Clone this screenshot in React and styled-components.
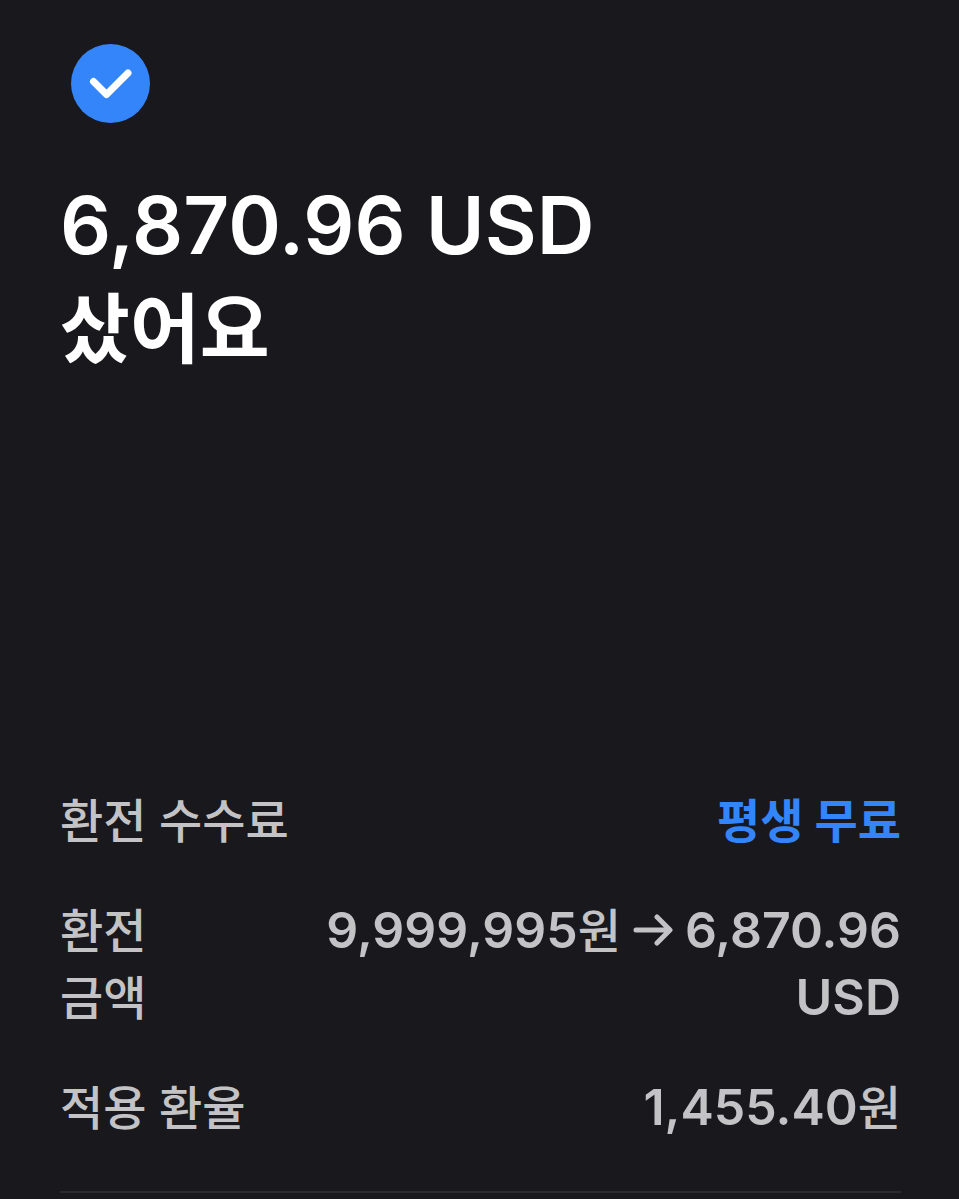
import React from 'react'
import styled, { createGlobalStyle } from 'styled-components'

const GlobalStyle = createGlobalStyle`
  *{
    box-sizing: border-box;
  }
  body{
    margin: 0;
    background: #19181d;
    font-family: Inter, "Noto Sans CJK KR", sans-serif;
    word-break: keep-all;
  }
`

const Page = styled.main`
  padding: 44px 58px 0 60px;
  overflow: hidden;
`

const CheckIcon = styled.svg`
  display: block;
  width: 80px;
  height: 80px;
  margin-left: 11px;
`

const Title = styled.h1`
  margin: 48px 0 0;
  color: #ffffff;
  font-size: 80px;
  font-weight: 600;
  line-height: 105px;
  .korean{
    display: block;
    font-size: 76px;
    font-weight: 700;
  }
`

const Details = styled.dl`
  display: flex;
  flex-direction: column;
  gap: 43px;
  margin: 405px 0 0;
  padding-bottom: 50px;
  border-bottom: 2px solid #2a2a32;
`

const Row = styled.div`
  display: flex;
  justify-content: space-between;
  line-height: 67px;
`

const Label = styled.dt`
  width: ${props => props.$narrow ? '100px' : 'auto'};
  color: #c3c3c6;
  font-size: 47px;
  font-weight: 500;
`

const Value = styled.dd`
  max-width: 600px;
  margin: 0;
  color: ${props => props.$accent ? '#3485fa' : '#c3c3c6'};
  font-size: ${props => props.$accent ? '47px' : '50px'};
  font-weight: ${props => props.$accent ? 700 : 600};
  text-align: right;
`

const Won = styled.span`
  font-size: 47px;
  font-weight: 500;
`

const Arrow = styled.svg`
  width: 40px;
  height: 36px;
  margin: 0 12px;
`

const App = () => {
  return (
    <Page>
      <GlobalStyle />
      <CheckIcon viewBox="0 0 80 80" role="img" aria-label="완료">
        <circle cx="39.5" cy="39.5" r="39.5" fill="#3485fa" />
        <path d="M22.5 37.5L35.5 50.5L57 29" fill="none" stroke="#fff" strokeWidth="7" strokeLinecap="round" strokeLinejoin="round" />
      </CheckIcon>
      <Title>
        6,870.96 USD <span className="korean">샀어요</span>
      </Title>
      <Details>
        <Row>
          <Label>환전 수수료</Label>
          <Value $accent>평생 무료</Value>
        </Row>
        <Row>
          <Label $narrow>환전 금액</Label>
          <Value>
            9,999,995<Won>원</Won>
            <Arrow viewBox="0 0 40 36" role="img" aria-label="에서">
              <path d="M3 18H36M24 5L37 18L24 31" fill="none" stroke="currentColor" strokeWidth="5" strokeLinecap="round" strokeLinejoin="round" />
            </Arrow>
            6,870.96 USD
          </Value>
        </Row>
        <Row>
          <Label>적용 환율</Label>
          <Value>1,455.40<Won>원</Won></Value>
        </Row>
      </Details>
    </Page>
  )
}

export default App
